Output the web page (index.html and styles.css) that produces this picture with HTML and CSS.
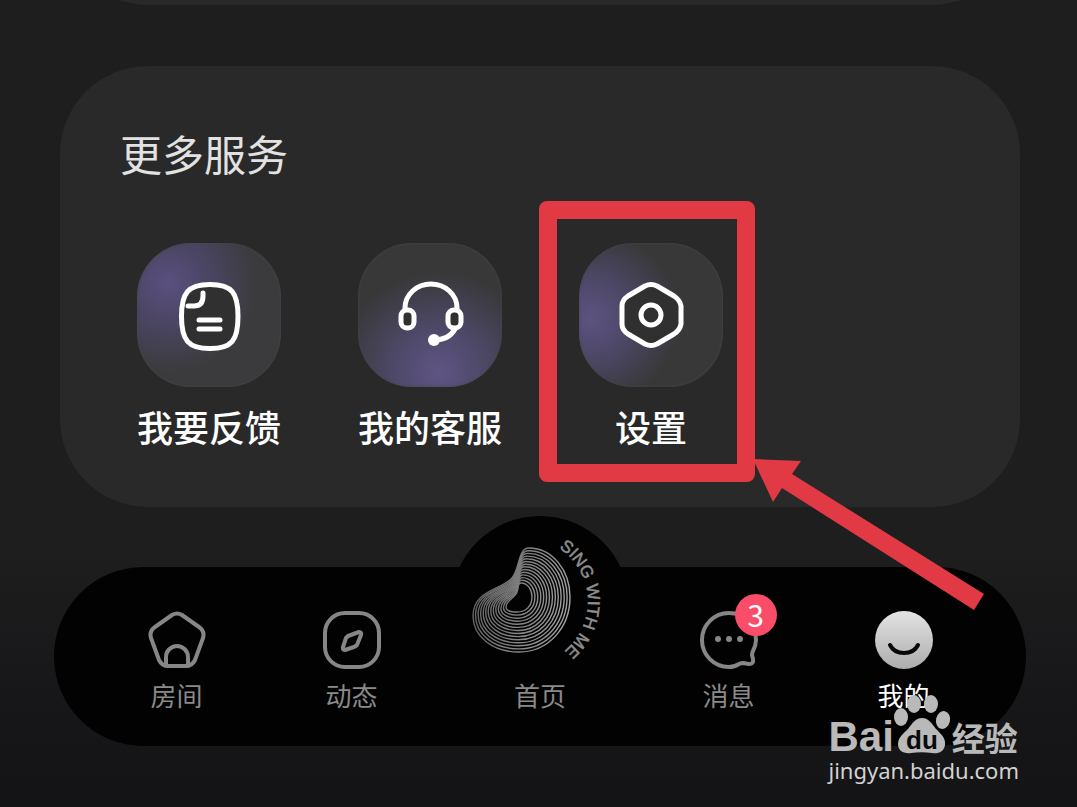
FILE: index.html
```html
<!DOCTYPE html>
<html lang="zh">
<head>
    <meta charset="UTF-8">
    <meta name="viewport" content="width=device-width, initial-scale=1.0">
    <title>我的</title>
    <link rel="stylesheet" href="styles.css">
</head>
<body>
    <div class="page">
        <div class="card card-prev"></div>

        <section class="card services">
            <h2>更多服务</h2>
            <div class="service-list">
                <button class="service" type="button">
                    <span class="tile tile-feedback">
                        <svg width="144" height="144" viewBox="0 0 144 144">
                            <path class="plate" d="M73 41.500C95 41.500 101 50 101 73.500C101 97 95 105.500 73 105.500C51 105.500 44.500 97 44.500 73.500C44.500 50 51 41.500 73 41.500Z"/>
                            <path d="M66 50V53Q66 63 57 63H51"/>
                            <path d="M62 77H83M62 86H83"/>
                        </svg>
                    </span>
                    <span class="service-name">我要反馈</span>
                </button>
                <button class="service" type="button">
                    <span class="tile tile-support">
                        <svg width="144" height="144" viewBox="0 0 144 144">
                            <path d="M47 67V65A26 24 0 0 1 99 65V67"/>
                            <rect class="plate" x="43" y="67" width="13" height="18" rx="6"/>
                            <rect class="plate" x="90" y="67" width="13" height="18" rx="6"/>
                            <path d="M97 86Q91 97 76 97"/>
                            <circle class="dot" cx="76" cy="97" r="6"/>
                        </svg>
                    </span>
                    <span class="service-name">我的客服</span>
                </button>
                <button class="service marked" type="button">
                    <span class="tile tile-settings">
                        <svg width="144" height="144" viewBox="0 0 144 144">
                            <path class="plate" d="M66 43Q72 40 78 43L95 53Q101 57 102 63V81Q101 87 95 91L78 101Q72 104 66 101L49 91Q43 87 43 81V63Q43 57 49 53Z"/>
                            <circle cx="72" cy="72" r="10"/>
                        </svg>
                    </span>
                    <span class="service-name">设置</span>
                    <svg class="arrow" width="232" height="152" viewBox="0 0 232 152">
                        <path d="M0 0L48 2L39 15L231 135L221 151L29 29L20 43Z"/>
                    </svg>
                </button>
            </div>
        </section>

        <nav class="tabbar">
            <a class="tab" href="#">
                <svg class="tab-icon" viewBox="0 0 58 58">
                    <path d="M24 4Q29 1 34 4L51 16Q57 20 55 27L47 49Q44 55 38 55H20Q14 55 11 49L3 27Q1 20 7 16Z"/>
                    <path d="M18 54V46A11 11 0 0 1 40 46V54"/>
                </svg>
                <span>房间</span>
            </a>
            <a class="tab" href="#">
                <svg class="tab-icon" viewBox="0 0 58 58">
                    <rect x="2" y="2" width="54" height="54" rx="20"/>
                    <path d="M25 25L36 21Q39 21 38 24L34 34Q33 35 31 36L22 39Q19 39 20 36L23 27Q24 26 25 25Z"/>
                </svg>
                <span>动态</span>
            </a>
            <a class="tab" href="#">
                <svg class="home-logo" width="136" height="134" viewBox="0 0 136 134">
                    <defs>
                        <linearGradient id="ring" x1="0" y1="50" x2="98" y2="70" gradientUnits="userSpaceOnUse">
                            <stop offset="0" stop-color="#606060"/>
                            <stop offset="1" stop-color="#a6a6a6"/>
                        </linearGradient>
                        <path id="arc" d="M87 13A64 64 0 0 1 87 120"/>
                    </defs>
                    <g id="rings" transform="translate(0 13)"></g>
                    <text><textPath href="#arc">SING WITH ME</textPath></text>
                </svg>
                <span>首页</span>
            </a>
            <a class="tab" href="#">
                <span class="icon-box">
                    <svg class="tab-icon" viewBox="0 0 58 58">
                        <path d="M29 2C14 2 2 14 2 29C2 44 14 56 29 56C33 56 36 55 39 53Q41 52 43 52L49 53Q54 53 53 48L52 44Q52 42 53 40C55 36 56 33 56 29C56 14 44 2 29 2Z"/>
                        <g class="dots">
                            <circle cx="18" cy="28" r="3"/>
                            <circle cx="29" cy="28" r="3"/>
                            <circle cx="40" cy="28" r="3"/>
                        </g>
                    </svg>
                    <b class="badge">3</b>
                </span>
                <span>消息</span>
            </a>
            <a class="tab active" href="#">
                <svg class="tab-icon" viewBox="0 0 58 58">
                    <defs>
                        <linearGradient id="face" x1="0" y1="0" x2="0" y2="1">
                            <stop offset="0" stop-color="#e4e4e4"/>
                            <stop offset="1" stop-color="#acacac"/>
                        </linearGradient>
                    </defs>
                    <circle class="face" cx="29" cy="29" r="29"/>
                    <path class="smile" d="M15 34Q19 42 29 42Q39 42 43 34"/>
                </svg>
                <span>我的</span>
            </a>
        </nav>

        <div class="watermark">
            <div class="brand">
                <span class="bai">Bai</span>
                <svg width="56" height="62" viewBox="0 0 56 62">
                    <ellipse cx="10" cy="24" rx="7" ry="9"/>
                    <ellipse cx="23" cy="11" rx="7" ry="9"/>
                    <ellipse cx="40" cy="11" rx="7" ry="9"/>
                    <ellipse cx="52" cy="27" rx="7" ry="9" transform="rotate(12 52 27)"/>
                    <path d="M31 25C38 25 41 31 45 36C50 41 55 45 54 52C53 59 47 61 41 60C34 59 27 59 20 60C13 61 7 58 7 51C7 44 13 40 17 36C21 31 24 25 31 25Z"/>
                    <text x="15" y="56">du</text>
                </svg>
                <span class="jingyan">经验</span>
            </div>
            <div class="site">jingyan.baidu.com</div>
        </div>
    </div>

    <script>
        // 唱片纹路：从外圈逐步过渡到内圈
        const outer = [57, 0, 80, 0, 98, 22, 98, 49, 98, 80, 76, 104, 47, 104, 20, 104, 1, 88, 1, 68, 1, 42, 30, 42, 40, 30, 48, 20, 46, 0, 57, 0];
        const inner = [49, 35, 56, 35, 60, 42, 60, 49, 60, 58, 54, 64, 45, 64, 38, 64, 34, 62, 34, 59, 34, 52, 43, 50, 45, 44, 47, 40, 45, 35, 49, 35];
        const count = 14;
        let html = '';
        for (let i = 0; i < count; i++) {
            const p = outer.map((v, k) => (v + (inner[k] - v) * i / (count - 1)).toFixed(1));
            html += `<path d="M${p.slice(0, 2)}C${p.slice(2).join(' ')}"/>`;
        }
        document.getElementById('rings').innerHTML = html;
    </script>
</body>
</html>
```
FILE: styles.css
```css
*, *::before, *::after {
    box-sizing: border-box;
}
body {
    margin: 0;
    font-family: "Noto Sans CJK SC", sans-serif;
    background-color: #141416;
    color: #fff;
}
.page {
    position: relative;
    min-height: 100vh;
    padding: 0 54px 61px;
    overflow: hidden;
    background: linear-gradient(#1e1e1e 0, #1e1e1e 68%, #17171a 86%, #141416 100%);
}
.card {
    margin: 0 3px 0 6px;
    border-radius: 88px;
    background-color: #292929;
}
.card-prev {
    height: 200px;
    margin-top: -195px;
}
.services {
    margin-top: 61px;
    padding: 57px 60px 57px;
}
h2 {
    margin: 0 0 60px;
    font-size: 42px;
    line-height: 60px;
    font-weight: 400;
    color: #e2e2e2;
}
.service-list {
    display: flex;
    gap: 77px;
    padding-left: 17px;
}
.service {
    position: relative;
    display: flex;
    flex-direction: column;
    align-items: center;
    gap: 15px;
    width: 144px;
    padding: 0;
    border: none;
    background: none;
    color: #fff;
    font-family: inherit;
    font-size: 36px;
    line-height: 48px;
    font-weight: 500;
    cursor: pointer;
}
.service-name {
    white-space: nowrap;
}
.tile {
    height: 144px;
    border-radius: 54px;
    box-shadow: inset 0 0 3px #484848;
}
.tile svg {
    display: block;
    fill: none;
    stroke: #fff;
    stroke-width: 5;
    stroke-linecap: round;
    stroke-linejoin: round;
}
.tile .plate {
    fill: #303031;
}
.tile .dot {
    fill: #fff;
    stroke: none;
}
.tile-feedback {
    background: radial-gradient(circle at 22% 28%, #5b5080 0, #4c4666 24%, #3b3b3d 58%);
}
.tile-support {
    background: radial-gradient(circle at 56% 90%, #5f5584 0, #504a6c 26%, #383839 66%);
}
.tile-settings {
    background: radial-gradient(circle at 8% 52%, #5d5380 0, #4e4869 24%, #383839 58%);
}

/* 红框和箭头 */
.marked::after {
    content: "";
    position: absolute;
    top: -42px;
    left: -40px;
    width: 216px;
    height: 281px;
    border: 18px solid #e23a45;
    border-radius: 8px;
}
.arrow {
    position: absolute;
    top: 216px;
    left: 174px;
    z-index: 2;
    fill: #e23a45;
}

.tabbar {
    position: relative;
    display: grid;
    grid-template-columns: 1fr 1fr 202px 1fr 1fr;
    align-items: end;
    margin-top: 60px;
    margin-right: -3px;
    padding: 44px 35px 34px;
    border-radius: 90px;
    background-color: #020202;
}
.tabbar::before {
    content: "";
    position: absolute;
    top: -51px;
    left: 50%;
    width: 178px;
    height: 178px;
    margin-left: -89px;
    border-radius: 50%;
    background-color: #020202;
}
.tab {
    position: relative;
    display: flex;
    flex-direction: column;
    align-items: center;
    gap: 9px;
    font-size: 26px;
    line-height: 34px;
    color: #8a8a8a;
    text-decoration: none;
}
.tab.active {
    color: #fff;
}
.icon-box {
    position: relative;
    height: 58px;
}
.tab-icon {
    display: block;
    width: 58px;
    height: 58px;
    fill: none;
    stroke: #868686;
    stroke-width: 4;
    stroke-linecap: round;
    stroke-linejoin: round;
}
.tab-icon .dots {
    fill: #868686;
    stroke: none;
}
.tab-icon .face {
    fill: url(#face);
    stroke: none;
}
.tab-icon .smile {
    stroke: #080808;
}
.badge {
    position: absolute;
    top: -17px;
    left: 35px;
    width: 42px;
    height: 42px;
    border-radius: 50%;
    background-color: #f94d6a;
    color: #fff;
    font-size: 30px;
    line-height: 40px;
    font-weight: 400;
    text-align: center;
}
.home-logo {
    margin-top: -76px;
    fill: none;
}
.home-logo path {
    stroke: url(#ring);
    stroke-width: 1.4;
}
.home-logo defs path {
    stroke: none;
}
.home-logo text {
    fill: #8e8e8e;
    stroke: #8e8e8e;
    stroke-width: 0.5;
    font-family: "Liberation Sans", sans-serif;
    font-size: 17px;
}

.watermark {
    position: absolute;
    right: 58px;
    bottom: 22px;
    z-index: 3;
    color: #b9b9b9;
}
.brand {
    display: flex;
    align-items: flex-end;
    line-height: 36px;
    font-weight: 700;
}
.bai {
    font-family: "Liberation Sans", sans-serif;
    font-size: 42px;
}
.brand svg {
    margin-left: -3px;
    fill: #b9b9b9;
    overflow: visible;
}
.brand svg text {
    fill: #0a0a0a;
    font-family: "Liberation Sans", sans-serif;
    font-size: 26px;
}
.jingyan {
    margin-left: 5px;
    font-size: 33px;
}
.site {
    color: #d2d2d2;
    font-family: "Noto Sans", sans-serif;
    font-size: 22px;
    line-height: 30px;
}
```
